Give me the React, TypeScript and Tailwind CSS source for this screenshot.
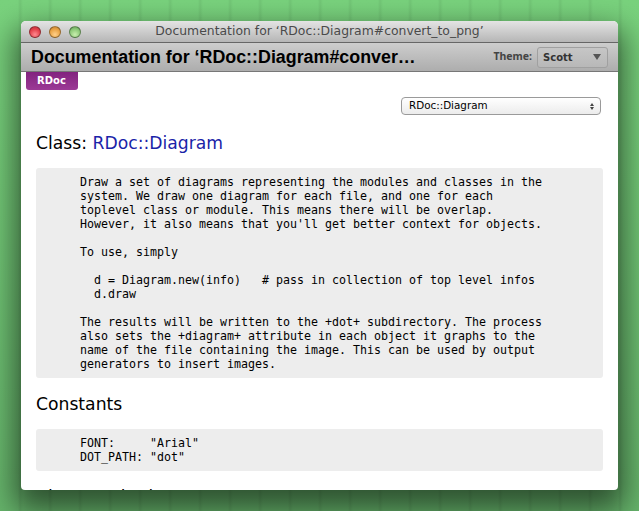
import React from 'react';

const mono = "font-['DejaVu_Sans_Mono',monospace]";

const description = `Draw a set of diagrams representing the modules and classes in the
system. We draw one diagram for each file, and one for each
toplevel class or module. This means there will be overlap.
However, it also means that you'll get better context for objects.

To use, simply

  d = Diagram.new(info)   # pass in collection of top level infos
  d.draw

The results will be written to the +dot+ subdirectory. The process
also sets the +diagram+ attribute in each object it graphs to the
name of the file containing the image. This can be used by output
generators to insert images.`;

const constants = `FONT:     "Arial"
DOT_PATH: "dot"`;

function TrafficLight({ color }: { color: string }) {
  return <span className={`block w-3 h-3 rounded-full border border-black/35 ${color}`} />;
}

export default function App() {
  return (
    <div className="w-[639px] h-[511px] overflow-hidden pt-[21px] pl-[21px] bg-[repeating-linear-gradient(90deg,transparent_0px,transparent_18px,rgba(0,0,0,0.06)_20px,transparent_23px,transparent_30px),linear-gradient(180deg,#79d27d_0%,#76ce7a_20%,#66b46b_100%)] font-['DejaVu_Sans',sans-serif]">
      <div className="w-[597px] h-[469px] rounded-t-[5px] rounded-b-[4px] overflow-hidden flex flex-col bg-white shadow-[0_14px_30px_6px_rgba(0,0,0,0.55)]">
        {/* title bar */}
        <div className="h-[22px] shrink-0 relative flex items-center justify-center bg-gradient-to-b from-[#e4e4e4] to-[#b6b6b6] border-b border-[#666]">
          <div className="absolute left-[8px] top-[5px] flex gap-2">
            <TrafficLight color="bg-[radial-gradient(circle_at_50%_75%,#ff8a90,#e2404a_60%,#b8303a)]" />
            <TrafficLight color="bg-[radial-gradient(circle_at_50%_75%,#ffd08a,#e8a244_60%,#b87a2c)]" />
            <TrafficLight color="bg-[radial-gradient(circle_at_50%_75%,#c8eeae,#8cc878_60%,#5a9450)]" />
          </div>
          <span className="text-[12.4px] leading-none text-[#4a4a4a]">Documentation for ‘RDoc::Diagram#convert_to_png’</span>
        </div>

        {/* header */}
        <div className="h-[29px] shrink-0 flex items-center justify-between pl-[10px] pr-[10px] bg-gradient-to-b from-[#cdcdcd] to-[#adadad] border-b border-[#777]">
          <span className="font-['Liberation_Sans',sans-serif] font-bold text-[17.85px] text-black">Documentation for ‘RDoc::Diagram#conver…</span>
          <div className="flex items-center gap-[5px]">
            <span className="font-['Noto_Sans',sans-serif] text-[10.5px] font-bold text-[#444]">Theme:</span>
            <div className="w-[71px] h-[21px] rounded-[3px] border border-[#a0a0a0] bg-gradient-to-b from-[#c6c6c6] to-[#b8b8b8] flex items-center justify-between px-[5px]">
              <span className="text-[10px] font-bold text-[#333]">Scott</span>
              <span className="w-0 h-0 border-x-[4px] border-x-transparent border-t-[6px] border-t-[#555] mr-[1px]" />
            </div>
          </div>
        </div>

        {/* page */}
        <div className="flex-1 min-h-0 overflow-hidden">
          <div className="pl-[5px]">
            <div className="w-[52px] h-[18px] rounded-b-[3px] bg-gradient-to-b from-[#82237f] to-[#9c3a96] flex items-center justify-center pr-[1px] pb-[1px] text-[10px] font-bold text-white">
              RDoc
            </div>
          </div>

          <div className="flex justify-end pr-[17px] pt-[7px]">
            <div className="w-[200px] h-[18px] rounded-[4px] border border-[#9a9a9a] bg-gradient-to-b from-white to-[#ececec] flex items-center justify-between pl-[7px] pr-[6px]">
              <span className="text-[10.35px] text-black">RDoc::Diagram</span>
              <span className="flex flex-col gap-[1px]">
                <span className="w-0 h-0 border-x-[2.5px] border-x-transparent border-b-[3px] border-b-[#444]" />
                <span className="w-0 h-0 border-x-[2.5px] border-x-transparent border-t-[3px] border-t-[#444]" />
              </span>
            </div>
          </div>

          <div className="px-[15px] pt-[16px]">
            <h1 className="text-[17.2px] leading-[24px] text-black">
              Class: <span className="text-[#1a23a8]">RDoc::Diagram</span>
            </h1>

            <pre className={`${mono} mt-[13px] rounded-[3px] bg-[#ededed] pl-[44px] py-[7px] text-[11.63px] leading-[14px] text-black`}>{description}</pre>

            <h2 className="mt-[14px] text-[17.2px] leading-[24px] text-black">Constants</h2>

            <pre className={`${mono} mt-[13px] rounded-[3px] bg-[#ededed] pl-[44px] py-[7px] text-[11.63px] leading-[14px] text-black`}>{constants}</pre>

            <h2 className="mt-[14px] text-[17.2px] leading-[24px] text-black">Class methods</h2>
          </div>
        </div>
      </div>
    </div>
  );
}
